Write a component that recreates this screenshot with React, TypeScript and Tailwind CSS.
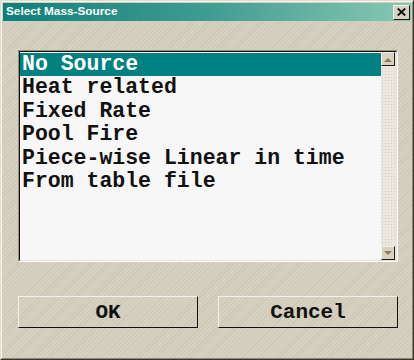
const items = [
  'No Source',
  'Heat related',
  'Fixed Rate',
  'Pool Fire',
  'Piece-wise Linear in time',
  'From table file',
];

const hatch =
  'bg-[repeating-linear-gradient(135deg,#d7d1c1_0px,#d7d1c1_2px,#cdc7b6_2px,#cdc7b6_3px)]';

function ScrollButton({ dir }: { dir: 'up' | 'down' }) {
  return (
    <div className="w-[14px] h-[14px] bg-[#d8d2c2] border border-t-[#f4f1ea] border-l-[#f4f1ea] border-r-[#1a1a1a] border-b-[#1a1a1a] flex items-center justify-center">
      <svg width="8" height="5" viewBox="0 0 8 5">
        {dir === 'up' ? (
          <path d="M0 5 L4 1 L8 5 Z" fill="#8c7a58" />
        ) : (
          <path d="M0 0 L8 0 L4 4 Z" fill="#8c7a58" />
        )}
      </svg>
    </div>
  );
}

function DialogButton({ label }: { label: string }) {
  return (
    <button className="w-[180px] h-[32px] border border-t-[#f4f1ea] border-l-[#f4f1ea] border-r-[#111] border-b-[#111] bg-transparent flex items-center justify-center">
      <span className="font-['Liberation_Mono',monospace] font-bold text-[21px] leading-none text-[#111]">
        {label}
      </span>
    </button>
  );
}

export default function App() {
  return (
    <div className={`w-[414px] h-[360px] border border-t-[#e2ddd0] border-l-[#e2ddd0] border-r-[#3a3630] border-b-[#3a3630] ${hatch}`}>
      <div className="h-full border border-t-[#f7f5ef] border-l-[#f7f5ef] border-r-[#8a8474] border-b-[#8a8474] p-px flex flex-col">
        {/* title bar */}
        <div className="h-[18px] flex items-center justify-between bg-gradient-to-r from-[#07807a] via-[#3e9c92] to-[#88c8b3] pl-[3px] pr-[1px]">
          <span className="font-['Liberation_Sans',sans-serif] font-bold text-[11.8px] text-white leading-none">
            Select Mass-Source
          </span>
          <div className="w-[17px] h-[15px] bg-[#d8d2c2] border border-t-[#f4f1ea] border-l-[#f4f1ea] border-r-[#1a1a1a] border-b-[#1a1a1a] flex items-center justify-center">
            <svg width="9" height="8" viewBox="0 0 9 8">
              <path d="M0.8 0.5 L8.2 7.5 M8.2 0.5 L0.8 7.5" stroke="#111" strokeWidth="1.9" />
            </svg>
          </div>
        </div>

        {/* list box */}
        <div className="mt-[29px] ml-[15px] w-[380px] h-[212px] border border-t-[#9a927c] border-l-[#9a927c] border-r-white border-b-white">
          <div className="h-full border border-t-[#111] border-l-[#111] border-r-[#e4e0d6] border-b-[#e4e0d6] flex">
            <div className="flex-1 bg-[#f7f7f7] pt-px">
              {items.map((item, i) => (
                <div
                  key={item}
                  className={`h-[23.4px] pl-[2px] flex items-center font-['Liberation_Mono',monospace] font-bold text-[21.5px] leading-none whitespace-nowrap ${
                    i === 0 ? 'bg-[#008080] text-white' : 'text-[#111]'
                  }`}
                >
                  {item}
                </div>
              ))}
            </div>
            <div className="w-[15px] flex flex-col justify-between bg-[#ece8e1] bg-[radial-gradient(#d2ccc0_0.6px,transparent_0.8px)] bg-[length:3px_3px]">
              <ScrollButton dir="up" />
              <ScrollButton dir="down" />
            </div>
          </div>
        </div>

        {/* buttons */}
        <div className="mt-[34px] ml-[15px] flex gap-[20px]">
          <DialogButton label="OK" />
          <DialogButton label="Cancel" />
        </div>
      </div>
    </div>
  );
}
